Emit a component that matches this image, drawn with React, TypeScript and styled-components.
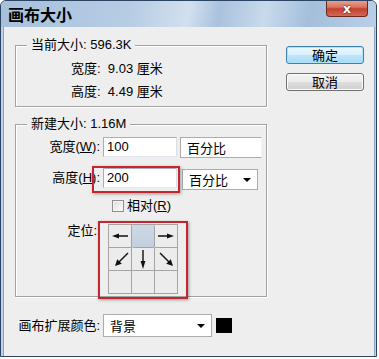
import * as React from 'react'
import styled, { createGlobalStyle } from 'styled-components'

const GlobalStyle = createGlobalStyle`
  html, body {
    margin: 0;
    padding: 0;
    background: #ffffff;
  }
  body {
    font-family: "Liberation Sans", "Noto Sans CJK SC", sans-serif;
    font-size: 13px;
    color: #000;
  }
`

const Window = styled.div`
  box-sizing: border-box;
  width: 377px;
  height: 357px;
  border: 1px solid #2b4462;
  border-radius: 6px 6px 0 0;
  background: #bdd2e7;
  display: flex;
  flex-direction: column;
  overflow: hidden;
`

const TitleBar = styled.div`
  flex: none;
  height: 26px;
  display: flex;
  justify-content: space-between;
  align-items: flex-start;
  padding: 0 8px 0 7px;
  background: linear-gradient(
    100deg,
    #a6c0dc 0%,
    #b7cde4 35%,
    #d2e0ee 50%,
    #a9c2dd 58%,
    #c8daec 70%,
    #a4bfdb 82%,
    #b9cfe6 100%
  );
`

const Title = styled.div`
  font-family: "Noto Sans CJK SC", sans-serif;
  font-weight: bold;
  font-size: 16px;
  line-height: 24px;
  margin-top: 1px;
  color: #000;
`

const CloseButton = styled.div`
  box-sizing: border-box;
  width: 42px;
  height: 17px;
  margin-top: -1px;
  border: 1px solid #6a2a22;
  border-top: none;
  border-radius: 0 0 4px 4px;
  background: linear-gradient(#e8a596 0%, #d8735f 45%, #c4412c 55%, #d26a55 100%);
  display: flex;
  align-items: center;
  justify-content: center;
  color: #fff;
  font-family: "DejaVu Sans", sans-serif;
  font-weight: bold;
  font-size: 13px;
  line-height: 1;
  text-shadow: 0 0 2px #5a1a10, 0 0 1px #5a1a10;
`

const Body = styled.div`
  flex: 1;
  margin: 0 1px 0 2px;
  border-left: 1px solid #8fa4ba;
  border-right: 1px solid #8fa4ba;
  background: #eeeeee;
  padding: 18px 0 0 11px;
  display: flex;
  flex-direction: column;
`

const TopSection = styled.div`
  display: flex;
  align-items: flex-start;
`

const LeftColumn = styled.div`
  width: 252px;
  display: flex;
  flex-direction: column;
`

const ButtonColumn = styled.div`
  margin-left: 19px;
  margin-top: 1px;
  display: flex;
  flex-direction: column;
  gap: 9px;
`

const Button = styled.div<{ $default?: boolean }>`
  box-sizing: border-box;
  width: 78px;
  height: 18px;
  border: 1px solid ${({ $default }) => ($default ? '#3c7fb1' : '#707070')};
  border-radius: 3px;
  background: ${({ $default }) =>
    $default
      ? 'linear-gradient(#eaf6fd 0%, #d9f0fc 50%, #bee6fd 51%, #a7d9f5 100%)'
      : 'linear-gradient(#f2f2f2 0%, #ebebeb 50%, #dddddd 51%, #cfcfcf 100%)'};
  box-shadow: ${({ $default }) =>
    $default ? 'inset 0 0 0 1px #a9e4fb' : 'inset 0 0 0 1px #fcfcfc'};
  display: flex;
  align-items: center;
  justify-content: center;
  font-family: "Noto Sans CJK SC", sans-serif;
  font-size: 13px;
  line-height: 16px;
`

const Group = styled.div<{ $height: number; $gapTop?: number }>`
  position: relative;
  box-sizing: border-box;
  height: ${({ $height }) => $height}px;
  margin-top: ${({ $gapTop }) => $gapTop ?? 0}px;
  border: 1px solid #a2a2a2;
  box-shadow: inset 1px 1px 0 #ffffff, 1px 1px 0 #ffffff;
  display: flex;
  flex-direction: column;
`

const Legend = styled.span`
  position: absolute;
  top: -9px;
  left: 11px;
  padding: 0 4px;
  background: #eeeeee;
  line-height: 16px;
`

const InfoList = styled.div`
  padding: 11px 0 0 55px;
  display: flex;
  flex-direction: column;
`

const InfoRow = styled.div`
  height: 23px;
  line-height: 23px;
  white-space: pre;
`

const Form = styled.div`
  padding-top: 12px;
  display: flex;
  flex-direction: column;
`

const FieldRow = styled.div<{ $gapTop?: number }>`
  position: relative;
  display: flex;
  align-items: flex-start;
  margin-top: ${({ $gapTop }) => $gapTop ?? 0}px;
`

const Label = styled.div<{ $width: number; $lineTop?: number }>`
  width: ${({ $width }) => $width}px;
  flex: none;
  text-align: right;
  line-height: 16px;
  margin-top: ${({ $lineTop }) => $lineTop ?? 2}px;
  white-space: nowrap;
`

const Key = styled.span`
  text-decoration: underline;
`

const TextInput = styled.div`
  box-sizing: border-box;
  width: 74px;
  height: 20px;
  margin-left: 3px;
  background: #ffffff;
  border: 1px solid #abadb3;
  border-right-color: #dbdfe6;
  border-bottom-color: #e3e9ef;
  padding-left: 3px;
  line-height: 18px;
`

const Select = styled.div<{ $width: number; $offset: number; $top?: number; $height?: number; $noArrow?: boolean }>`
  box-sizing: border-box;
  width: ${({ $width }) => $width}px;
  height: ${({ $height }) => $height ?? 21}px;
  margin-left: ${({ $offset }) => $offset}px;
  margin-top: ${({ $top }) => $top ?? 0}px;
  background: #ffffff;
  border: 1px solid #acacac;
  border-right-color: ${({ $noArrow }) => ($noArrow ? '#f4f4f4' : '#acacac')};
  display: flex;
  align-items: center;
  justify-content: space-between;
  padding: 0 6px 0 6px;
  font-family: "Noto Sans CJK SC", sans-serif;
  line-height: 16px;
`

const Caret = styled.span`
  width: 0;
  height: 0;
  border-left: 4px solid transparent;
  border-right: 4px solid transparent;
  border-top: 4px solid #000;
`

const Highlight = styled.div`
  position: absolute;
  left: 76px;
  top: -2px;
  width: 88px;
  height: 27px;
  box-sizing: border-box;
  border: 2px solid #c7252e;
  box-shadow: 1px 1px 3px rgba(0, 0, 0, 0.35);
  pointer-events: none;
`

const CheckRow = styled.div`
  margin-top: 9px;
  padding-left: 96px;
  display: flex;
  align-items: center;
  gap: 3px;
  line-height: 14px;
`

const CheckBox = styled.span`
  box-sizing: border-box;
  width: 12px;
  height: 12px;
  border: 1px solid #8f8f8f;
  background: linear-gradient(135deg, #dcdcdc, #ffffff);
  box-shadow: inset 0 0 0 1px #f4f4f4;
`

const AnchorFrame = styled.div`
  margin-left: 1px;
  border: 2px solid #c7252e;
  padding: 1px 8px 3px 8px;
  box-shadow: 1px 1px 3px rgba(0, 0, 0, 0.35);
`

const AnchorGrid = styled.div`
  display: grid;
  grid-template-columns: repeat(3, 23px);
  grid-template-rows: repeat(3, 23px);
  border-left: 1px solid #a4a4a4;
  border-top: 1px solid #a4a4a4;
  background: #ececec;
`

const Cell = styled.div<{ $active?: boolean }>`
  box-sizing: border-box;
  border-right: 1px solid #a4a4a4;
  border-bottom: 1px solid #a4a4a4;
  background: ${({ $active }) =>
    $active ? 'linear-gradient(#cfd9e6, #c2cfdf)' : 'transparent'};
  border-radius: ${({ $active }) => ($active ? '2px' : '0')};
  display: flex;
  align-items: center;
  justify-content: center;
`

const BottomRow = styled.div`
  margin-top: 17px;
  display: flex;
  align-items: center;
`

const Swatch = styled.div`
  width: 16px;
  height: 15px;
  margin-left: 4px;
  background: #000;
`

type Dir = 'left' | 'right' | 'down' | 'downLeft' | 'downRight'

const arrowPaths: Record<Dir, { line: string; head: string }> = {
  left: { line: 'M19 11 L7 11', head: '3,11 10,8.6 10,13.4' },
  right: { line: 'M3 11 L15 11', head: '19,11 12,8.6 12,13.4' },
  down: { line: 'M11 2 L11 16', head: '11,21 8.6,13 13.4,13' },
  downLeft: { line: 'M19 5 L10 14', head: '6,18 8.2,11.2 12.8,15.8' },
  downRight: { line: 'M5 5 L14 14', head: '18,18 11.2,15.8 15.8,11.2' },
}

const Arrow = ({ dir }: { dir: Dir }) => (
  <svg width="22" height="22" viewBox="0 0 22 22">
    <path d={arrowPaths[dir].line} stroke="#111" strokeWidth="1.4" fill="none" />
    <polygon points={arrowPaths[dir].head} fill="#111" />
  </svg>
)

const cells: (Dir | 'active' | null)[] = [
  'left', 'active', 'right',
  'downLeft', 'down', 'downRight',
  null, null, null,
]

export default function App() {
  return (
    <>
      <GlobalStyle />
      <Window>
        <TitleBar>
          <Title>画布大小</Title>
          <CloseButton>x</CloseButton>
        </TitleBar>
        <Body>
          <TopSection>
            <LeftColumn>
              <Group $height={62}>
                <Legend>当前大小: 596.3K</Legend>
                <InfoList>
                  <InfoRow>宽度:  9.03 厘米</InfoRow>
                  <InfoRow>高度:  4.49 厘米</InfoRow>
                </InfoList>
              </Group>
              <Group $height={173} $gapTop={17}>
                <Legend>新建大小: 1.16M</Legend>
                <Form>
                  <FieldRow>
                    <Label $width={84}>
                      宽度(<Key>W</Key>):
                    </Label>
                    <TextInput>100</TextInput>
                    <Select $width={82} $offset={3} $noArrow>
                      百分比
                    </Select>
                  </FieldRow>
                  <FieldRow $gapTop={10}>
                    <Label $width={84}>
                      高度(<Key>H</Key>):
                    </Label>
                    <TextInput>200</TextInput>
                    <Select $width={76} $offset={5} $top={1}>
                      百分比
                      <Caret />
                    </Select>
                    <Highlight />
                  </FieldRow>
                  <CheckRow>
                    <CheckBox />
                    <span>
                      相对(<Key>R</Key>)
                    </span>
                  </CheckRow>
                  <FieldRow $gapTop={8}>
                    <Label $width={81} $lineTop={2}>
                      定位:
                    </Label>
                    <AnchorFrame>
                      <AnchorGrid>
                        {cells.map((c, i) => (
                          <Cell key={i} $active={c === 'active'}>
                            {c && c !== 'active' ? <Arrow dir={c} /> : null}
                          </Cell>
                        ))}
                      </AnchorGrid>
                    </AnchorFrame>
                  </FieldRow>
                </Form>
              </Group>
            </LeftColumn>
            <ButtonColumn>
              <Button $default>确定</Button>
              <Button>取消</Button>
            </ButtonColumn>
          </TopSection>
          <BottomRow>
            <Label $width={85} $lineTop={0}>
              画布扩展颜色:
            </Label>
            <Select $width={109} $offset={3} $height={23}>
              背景
              <Caret />
            </Select>
            <Swatch />
          </BottomRow>
        </Body>
      </Window>
    </>
  )
}
